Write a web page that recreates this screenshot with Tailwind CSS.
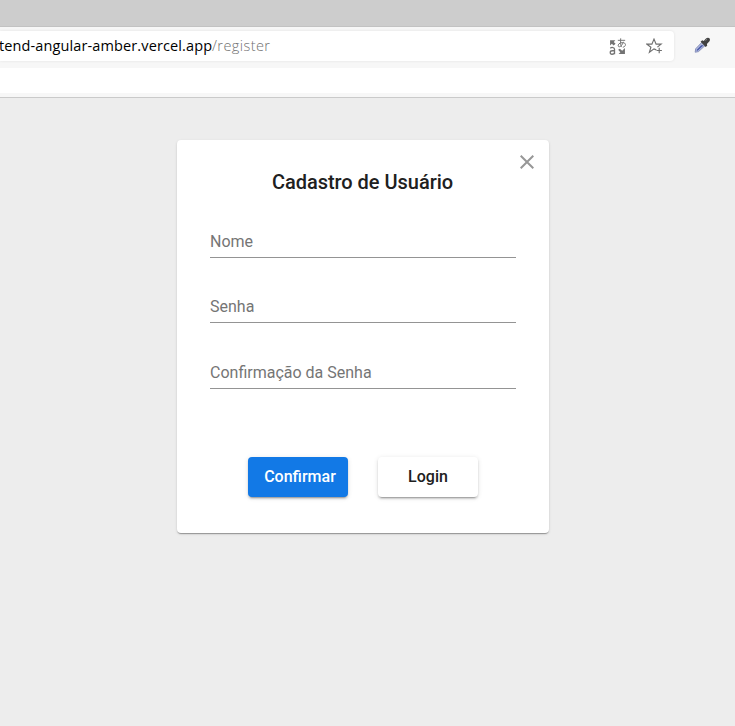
<!DOCTYPE html>
<html lang="pt-BR">
<head>
<meta charset="utf-8">
<title>Cadastro de Usuário</title>
<script src="https://cdn.jsdelivr.net/npm/@tailwindcss/browser@4"></script>
</head>
<body class="flex h-screen flex-col overflow-hidden bg-[#ededed] font-['Roboto',sans-serif]">
  <header class="shrink-0">
    <div class="h-[27px] border-b border-[#c2c2c2] bg-[#cdcdcd]"></div>
    <div class="flex h-[41px] items-start bg-[#f7f7f7] pt-1">
      <div class="flex h-[30px] w-[674px] items-center rounded-r-[4px] bg-white shadow-[0_0_3px_rgba(0,0,0,0.09)]">
        <div class="-ml-px flex-1 whitespace-nowrap font-['Open_Sans',sans-serif] text-[14.5px] leading-[30px] text-[#707070]"><span class="inline-block w-[213px] tracking-[0.12px] text-black">tend-angular-amber.vercel.app</span><span class="font-light tracking-[0.42px]">/register</span></div>
        <svg class="mr-5 h-[17px] w-[17px]" viewBox="0 0 16 16" fill="none" stroke="#737373">
          <path d="M1 2h5L4.5 3.7 6.2 5.3 4.3 7 2.7 5.5 1 7z" fill="#737373" stroke="none"/>
          <path d="M15 15H9l1.7-1.7L8.6 11l1.6-1 2.2 1.9L15 9.5z" fill="#737373" stroke="none"/>
          <path d="M1.2 9.6c1.2-1 4-1 4 .9v4.8M5.2 12H3.1c-2.6 0-2.5 3.3-.3 3.3 1.3 0 2.4-.8 2.4-1.8" stroke-width="1.2"/>
          <path d="M8.3 2.2h6.9M11 .3c-.2 3.6-.2 5.8.7 8.2M13.5 3.6c-.8 3.1-3 5.1-4.3 4.6-1.7-.9.1-3.9 3.4-3.9 4 0 3.6 3.9.4 4.4" stroke-width=".9"/>
        </svg>
        <svg class="mr-[11px] h-[17px] w-[17px]" viewBox="0 0 17 17" fill="none" stroke="#6f6f6f" stroke-width="1.15">
          <path d="M10.3 11.9 8 10.9 3.4 14.2 4.9 9.2.9 6.1h5L8 1.1l2.1 5h5l-3.7 3"/>
          <path d="M13.2 9.8v5.4M10.5 12.5h5.4"/>
        </svg>
      </div>
      <svg class="ml-5 mt-[6px] h-[17px] w-[17px]" viewBox="0 0 17 17" fill="none">
        <path d="M7.8 5.4 1.7 11.8l-.5 3.4 3.3-.6 6.7-6.2" fill="#b3bbde" stroke="#8790bb"/>
        <path d="m7.2 8.3-4.9 5 1.4.5L9.6 8.3z" fill="#4658a8"/>
        <path d="m6.6 4.8 1.6-1.6 1.5.8L12 1.5c1.2-1.3 5-1.3 3.7 2.6l-2.8 3 .3 1.7-1.6 1.3z" fill="#414141"/>
        <path d="m11.5 3.5 1.6-1.3" stroke="#888"/>
      </svg>
    </div>
    <div class="h-[25px] bg-white"></div>
    <div class="h-[5px] border-b border-[#cacaca] bg-[#f7f7f7]"></div>
  </header>
  <main class="flex-1 pl-[177px] pt-[42px]">
    <section class="relative flex h-[393px] w-[372px] flex-col rounded-[4px] bg-white px-[33px] pt-[30px] shadow-[0_2px_1px_-1px_rgba(0,0,0,0.2),0_1px_1px_0_rgba(0,0,0,0.14),0_1px_3px_0_rgba(0,0,0,0.12)]">
      <button class="absolute right-[15px] top-[15px] h-[14px] w-[14px]" aria-label="Fechar">
        <svg class="block h-[14px] w-[14px]" viewBox="0 0 14 14" stroke="#979797" stroke-width="2"><path d="M.7.7l12.6 12.6M13.3.7.7 13.3"/></svg>
      </button>
      <h1 class="-ml-px text-center text-[20px] font-medium leading-6 tracking-[-0.03px] text-[#202020]">Cadastro de Usuário</h1>
      <div class="mt-[36px] h-[28px] border-b border-[#949494] text-[16px] leading-[24px] text-[#757575]">Nome</div>
      <div class="mt-[37px] h-[28px] border-b border-[#949494] text-[16px] leading-[24px] text-[#757575]">Senha</div>
      <div class="mt-[38px] h-[28px] border-b border-[#949494] text-[16px] leading-[24px] text-[#757575]">Confirmação da Senha</div>
      <div class="mt-[68px] flex gap-[30px] pl-[38px] text-[16px] font-medium">
        <button class="h-10 w-[100px] rounded-[4px] bg-[#1279e6] pl-1 text-white shadow-[0_3px_1px_-2px_rgba(0,0,0,0.2),0_2px_2px_0_rgba(0,0,0,0.14),0_1px_5px_0_rgba(0,0,0,0.12)]">Confirmar</button>
        <button class="h-10 w-[100px] rounded-[4px] bg-white text-[#202020] shadow-[0_3px_1px_-2px_rgba(0,0,0,0.2),0_2px_2px_0_rgba(0,0,0,0.14),0_1px_5px_0_rgba(0,0,0,0.12)]">Login</button>
      </div>
    </section>
  </main>
</body>
</html>
